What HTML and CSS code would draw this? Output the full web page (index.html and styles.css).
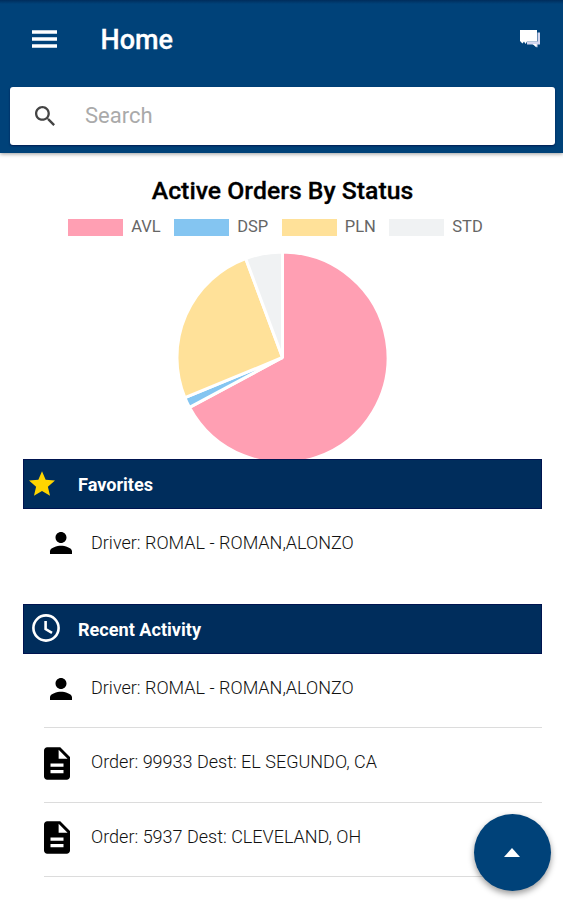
FILE: index.html
```html
<!DOCTYPE html>
<html lang="en">
<head>
    <meta charset="UTF-8">
    <meta name="viewport" content="width=device-width, initial-scale=1.0">
    <title>Home</title>
    <link rel="stylesheet" href="styles.css">
</head>
<body>
    <header class="header">
        <div class="toolbar">
            <svg class="menu-icon" viewBox="0 0 26 18"><path d="M0 0h26v3.6H0zM0 7.2h26v3.6H0zM0 14.4h26V18H0z"/></svg>
            <h1>Home</h1>
            <svg class="chat-icon" viewBox="0 0 20 18">
                <path class="back" d="M17.5 2.5H20v12h-2.5V17.5L14 14.5H7v-3h10.5z"/>
                <path d="M0 0h17v11.5H7L5.5 14 4 11.5 2.5 13.5 0 11zM12.5 14h4v3.5z"/>
            </svg>
        </div>
        <div class="search">
            <svg class="search-icon" viewBox="3 3 17.5 17.5"><path d="M15.5 14h-.79l-.28-.27C15.41 12.59 16 11.11 16 9.5 16 5.91 13.09 3 9.5 3S3 5.91 3 9.5 5.91 16 9.5 16c1.61 0 3.09-.59 4.23-1.57l.27.28v.79l5 4.99L20.49 19l-4.99-5zm-6 0C7.01 14 5 11.99 5 9.5S7.01 5 9.5 5 14 7.01 14 9.5 11.99 14 9.5 14z"/></svg>
            <input type="text" class="search-input" placeholder="Search">
        </div>
    </header>
    <main class="content">
        <section class="chart">
            <h2>Active Orders By Status</h2>
            <ul class="legend">
                <li><span class="swatch avl"></span>AVL</li>
                <li><span class="swatch dsp"></span>DSP</li>
                <li><span class="swatch pln"></span>PLN</li>
                <li><span class="swatch std"></span>STD</li>
            </ul>
            <svg class="pie" viewBox="0 0 212 212">
                <path class="avl" d="M106 106V0A106 106 0 1 1 12.6 156.1z"/>
                <path class="dsp" d="M106 106L12.6 156.1A106 106 0 0 1 8 146.4z"/>
                <path class="pln" d="M106 106L8 146.4A106 106 0 0 1 69 6.6z"/>
                <path class="std" d="M106 106L69 6.6A106 106 0 0 1 106 0z"/>
            </svg>
        </section>
        <section class="panel favorites">
            <h3>
                <svg class="star-icon" viewBox="2 2 20 19"><path d="M12 17.27L18.18 21l-1.64-7.03L22 9.24l-7.19-.61L12 2 9.19 8.63 2 9.24l5.46 4.73L5.82 21z"/></svg>
                <span>Favorites</span>
            </h3>
            <ul class="list">
                <li>
                    <svg class="person-icon" viewBox="4 4 16 16"><path d="M12 12c2.21 0 4-1.79 4-4s-1.79-4-4-4-4 1.79-4 4 1.79 4 4 4zm0 2c-2.67 0-8 1.34-8 4v2h16v-2c0-2.66-5.33-4-8-4z"/></svg>
                    <span>Driver: ROMAL - ROMAN,ALONZO</span>
                </li>
            </ul>
        </section>
        <section class="panel recent">
            <h3>
                <svg class="clock-icon" viewBox="0 0 28 28"><circle cx="14" cy="14" r="12.6"/><path d="M13.6 7v8l6.4 3.8"/></svg>
                <span>Recent Activity</span>
            </h3>
            <ul class="list">
                <li>
                    <svg class="person-icon" viewBox="4 4 16 16"><path d="M12 12c2.21 0 4-1.79 4-4s-1.79-4-4-4-4 1.79-4 4 1.79 4 4 4zm0 2c-2.67 0-8 1.34-8 4v2h16v-2c0-2.66-5.33-4-8-4z"/></svg>
                    <span>Driver: ROMAL - ROMAN,ALONZO</span>
                </li>
                <li>
                    <svg class="doc-icon" viewBox="4 2 16 20"><path d="M14 2H6c-1.1 0-1.99.9-1.99 2L4 20c0 1.1.89 2 1.99 2H18c1.1 0 2-.9 2-2V8l-6-6zm2 16H8v-2h8v2zm0-4H8v-2h8v2zm-3-5V3.5L18.5 9H13z"/></svg>
                    <span>Order: 99933 Dest: EL SEGUNDO, CA</span>
                </li>
                <li>
                    <svg class="doc-icon" viewBox="4 2 16 20"><path d="M14 2H6c-1.1 0-1.99.9-1.99 2L4 20c0 1.1.89 2 1.99 2H18c1.1 0 2-.9 2-2V8l-6-6zm2 16H8v-2h8v2zm0-4H8v-2h8v2zm-3-5V3.5L18.5 9H13z"/></svg>
                    <span>Order: 5937 Dest: CLEVELAND, OH</span>
                </li>
            </ul>
        </section>
    </main>
    <button class="fab" aria-label="Open actions">
        <svg viewBox="0 0 16 9"><path d="M0 9l8-9 8 9z"/></svg>
    </button>
</body>
</html>
```
FILE: styles.css
```css
* {
    box-sizing: border-box;
}
body {
    margin: 0;
    height: 900px;
    overflow: hidden;
    font-family: Roboto, sans-serif;
    background-color: white;
    color: #111;
}
h1, h2, h3, ul {
    margin: 0;
    padding: 0;
}
ul {
    list-style: none;
}
svg {
    display: block;
    flex-shrink: 0;
}
.header {
    height: 153.4px;
    padding: 0 8px 0 9.5px;
    background: linear-gradient(#002d5c, #004279 4px);
    box-shadow: 0 1px 4px rgba(0, 0, 0, 0.4);
}
.toolbar {
    display: flex;
    align-items: center;
    height: 87px;
    padding: 0 15px 9px 22px;
    color: white;
}
.toolbar h1 {
    flex: 1;
    margin: 2px 0 0 44px;
    font-size: 27px;
    font-weight: 500;
    -webkit-text-stroke: 0.3px white;
}
.menu-icon {
    width: 25px;
    height: 18px;
    fill: white;
}
.chat-icon {
    width: 20px;
    height: 18px;
    fill: white;
}
.chat-icon .back {
    fill: #d4d7ef;
}
.search {
    display: flex;
    align-items: center;
    height: 57.5px;
    padding-left: 25.5px;
    border-radius: 3px;
    background-color: white;
    box-shadow: 0 1px 2px #001c50;
}
.search-icon {
    width: 20px;
    height: 20px;
    fill: #444;
}
.search-input {
    flex: 1;
    margin-left: 30px;
    padding: 0;
    border: none;
    outline: none;
    font-family: inherit;
    font-size: 22px;
}
.search-input::placeholder {
    color: #aaa;
}
.content {
    padding: 0 21px 0 23px;
}
.chart {
    display: flex;
    flex-direction: column;
    align-items: center;
    height: 306px;
    padding-top: 23px;
    overflow: hidden;
}
.chart h2 {
    font-size: 24.8px;
    font-weight: 500;
    line-height: 30px;
    color: black;
    -webkit-text-stroke: 0.3px black;
}
.legend {
    display: flex;
    gap: 13.5px;
    margin: 11px 14px 0 0;
    font-size: 16.5px;
    line-height: 20px;
    color: #666;
}
.legend li {
    display: flex;
    align-items: center;
    gap: 8px;
}
.swatch {
    width: 55px;
    height: 17px;
}
.swatch.avl { background-color: #ff9fb3; }
.swatch.dsp { background-color: #84c5f1; }
.swatch.pln { background-color: #ffe199; }
.swatch.std { background-color: #f0f2f3; }
.pie {
    width: 211px;
    height: 211px;
    margin-top: 15px;
    stroke: white;
    stroke-width: 3;
    stroke-linejoin: bevel;
}
.pie .avl { fill: #ff9fb3; }
.pie .dsp { fill: #84c5f1; }
.pie .pln { fill: #ffe199; }
.pie .std { fill: #f0f2f3; }
.panel h3 {
    display: flex;
    align-items: center;
    height: 50px;
    padding-left: 5px;
    background-color: #002d5c;
    border: 1px solid #001450;
    color: white;
    font-size: 18.1px;
    font-weight: 700;
}
.star-icon {
    width: 26px;
    height: 25px;
    margin: 0 23px 2px 0;
    fill: #ffd500;
}
.clock-icon {
    width: 28px;
    height: 28px;
    margin: 0 18px 3px 3px;
    fill: none;
    stroke: white;
    stroke-width: 2.6;
}
.list {
    margin-left: 21px;
}
.list li {
    display: flex;
    align-items: center;
    height: 74.7px;
    padding-bottom: 6px;
    border-bottom: 1.5px solid #dcdcdc;
    font-size: 18px;
    font-weight: 300;
}
.list li:first-child {
    height: 73.5px;
}
.favorites {
    height: 145px;
}
.favorites .list li {
    padding-bottom: 8px;
    border-bottom: none;
}
.person-icon {
    width: 22px;
    height: 22px;
    margin: 2px 19px 0 6px;
}
.doc-icon {
    width: 26px;
    height: 33px;
    margin: 3px 21px 0 0;
}
.fab {
    position: fixed;
    right: 12.5px;
    bottom: 9px;
    display: flex;
    align-items: center;
    justify-content: center;
    width: 77px;
    height: 77px;
    padding: 0;
    border: none;
    border-radius: 50%;
    background-color: #004279;
    box-shadow: 0 3px 6px rgba(0, 0, 0, 0.4);
}
.fab svg {
    width: 16px;
    height: 9px;
    fill: white;
}
```
